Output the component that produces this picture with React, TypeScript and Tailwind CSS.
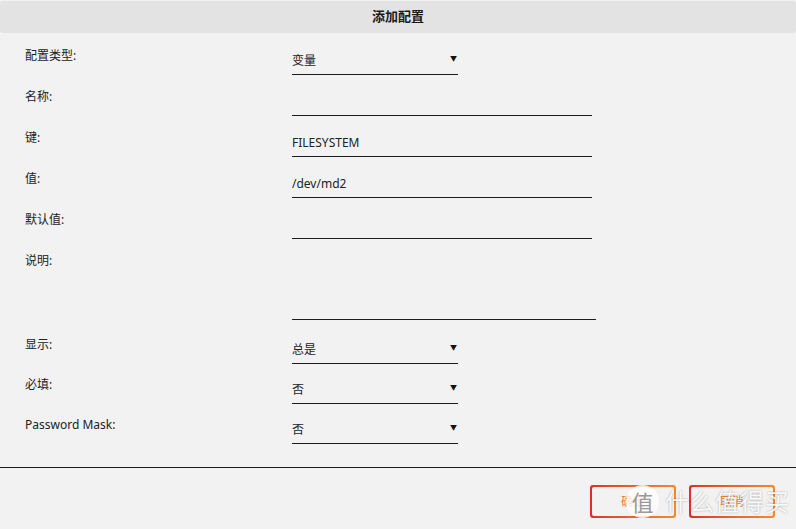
import React from 'react';

const font = { fontFamily: '"Noto Sans", "Noto Sans CJK SC", sans-serif' };

function Label({ children }: { children: React.ReactNode }) {
  return (
    <div className="w-[267px] shrink-0 pt-[4px] text-[12px] leading-[14px] text-[#222]">
      {children}
    </div>
  );
}

function TextField({ value }: { value?: string }) {
  return (
    <div className="w-[300px] h-[30px] border-b border-[#1c1c1c] flex items-end pb-[6px] text-[12px] leading-[14px] text-[#222]">
      {value}
    </div>
  );
}

function SelectField({ value }: { value: string }) {
  return (
    <div className="w-[166px] h-[30px] border-b border-[#1c1c1c] flex items-end justify-between pb-[6px] pr-[1px] text-[12px] leading-[14px] text-[#222]">
      <span>{value}</span>
      <span className="text-[7px] leading-[14px] mb-[2px] text-[#111]">▼</span>
    </div>
  );
}

function Row({ h, children }: { h: string; children: React.ReactNode }) {
  return <div className={`flex items-start pl-[25px] ${h}`}>{children}</div>;
}

export default function App() {
  return (
    <div className="relative w-[796px] h-[529px] bg-[#f2f2f2] overflow-hidden" style={font}>
      <div className="h-[32px] mt-[1px] bg-[#e3e3e3] rounded-[3px] flex items-center justify-center">
        <span className="text-[13px] font-bold text-[#1a1a1a]">添加配置</span>
      </div>

      <div className="pt-[12px]">
        <Row h="h-[41px]">
          <Label>配置类型:</Label>
          <SelectField value="变量" />
        </Row>
        <Row h="h-[41px]">
          <Label>名称:</Label>
          <TextField />
        </Row>
        <Row h="h-[41px]">
          <Label>键:</Label>
          <TextField value="FILESYSTEM" />
        </Row>
        <Row h="h-[41px]">
          <Label>值:</Label>
          <TextField value="/dev/md2" />
        </Row>
        <Row h="h-[41px]">
          <Label>默认值:</Label>
          <TextField />
        </Row>
        <Row h="h-[84px]">
          <Label>说明:</Label>
          <div className="w-[304px] h-[70px] border-b border-[#1c1c1c]" />
        </Row>
        <Row h="h-[40px]">
          <Label>显示:</Label>
          <SelectField value="总是" />
        </Row>
        <Row h="h-[40px]">
          <Label>必填:</Label>
          <SelectField value="否" />
        </Row>
        <Row h="h-[40px]">
          <Label>Password Mask:</Label>
          <SelectField value="否" />
        </Row>
      </div>

      <div className="mt-[13px] border-t border-[#1c1c1c]" />

      <div className="flex justify-end gap-[13px] pt-[17px] pr-[21px]">
        <button className="w-[86px] h-[33px] rounded-[3px] p-[2px] bg-gradient-to-r from-[#e22a2a] to-[#f7892a]">
          <span className="flex h-full w-full items-center justify-center rounded-[2px] bg-[#f2f2f2] text-[12px] text-[#f07a24]">
            确定
          </span>
        </button>
        <button className="w-[86px] h-[33px] rounded-[3px] p-[2px] bg-gradient-to-r from-[#e22a2a] to-[#f7892a]">
          <span className="flex h-full w-full items-center justify-center rounded-[2px] bg-[#f2f2f2] text-[12px] text-[#f07a24]">
            取消
          </span>
        </button>
      </div>

      <div className="absolute left-[626px] top-[485px] flex items-center gap-[6px] pointer-events-none">
        <div className="w-[33px] h-[33px] rounded-full bg-white/80 flex items-center justify-center text-[22px] leading-none text-[#9a9a9a]">
          值
        </div>
        <span className="text-[24px] leading-none text-white/90 tracking-[1px] [text-shadow:0_0_2px_rgba(0,0,0,0.35)]">
          什么值得买
        </span>
      </div>
    </div>
  );
}
